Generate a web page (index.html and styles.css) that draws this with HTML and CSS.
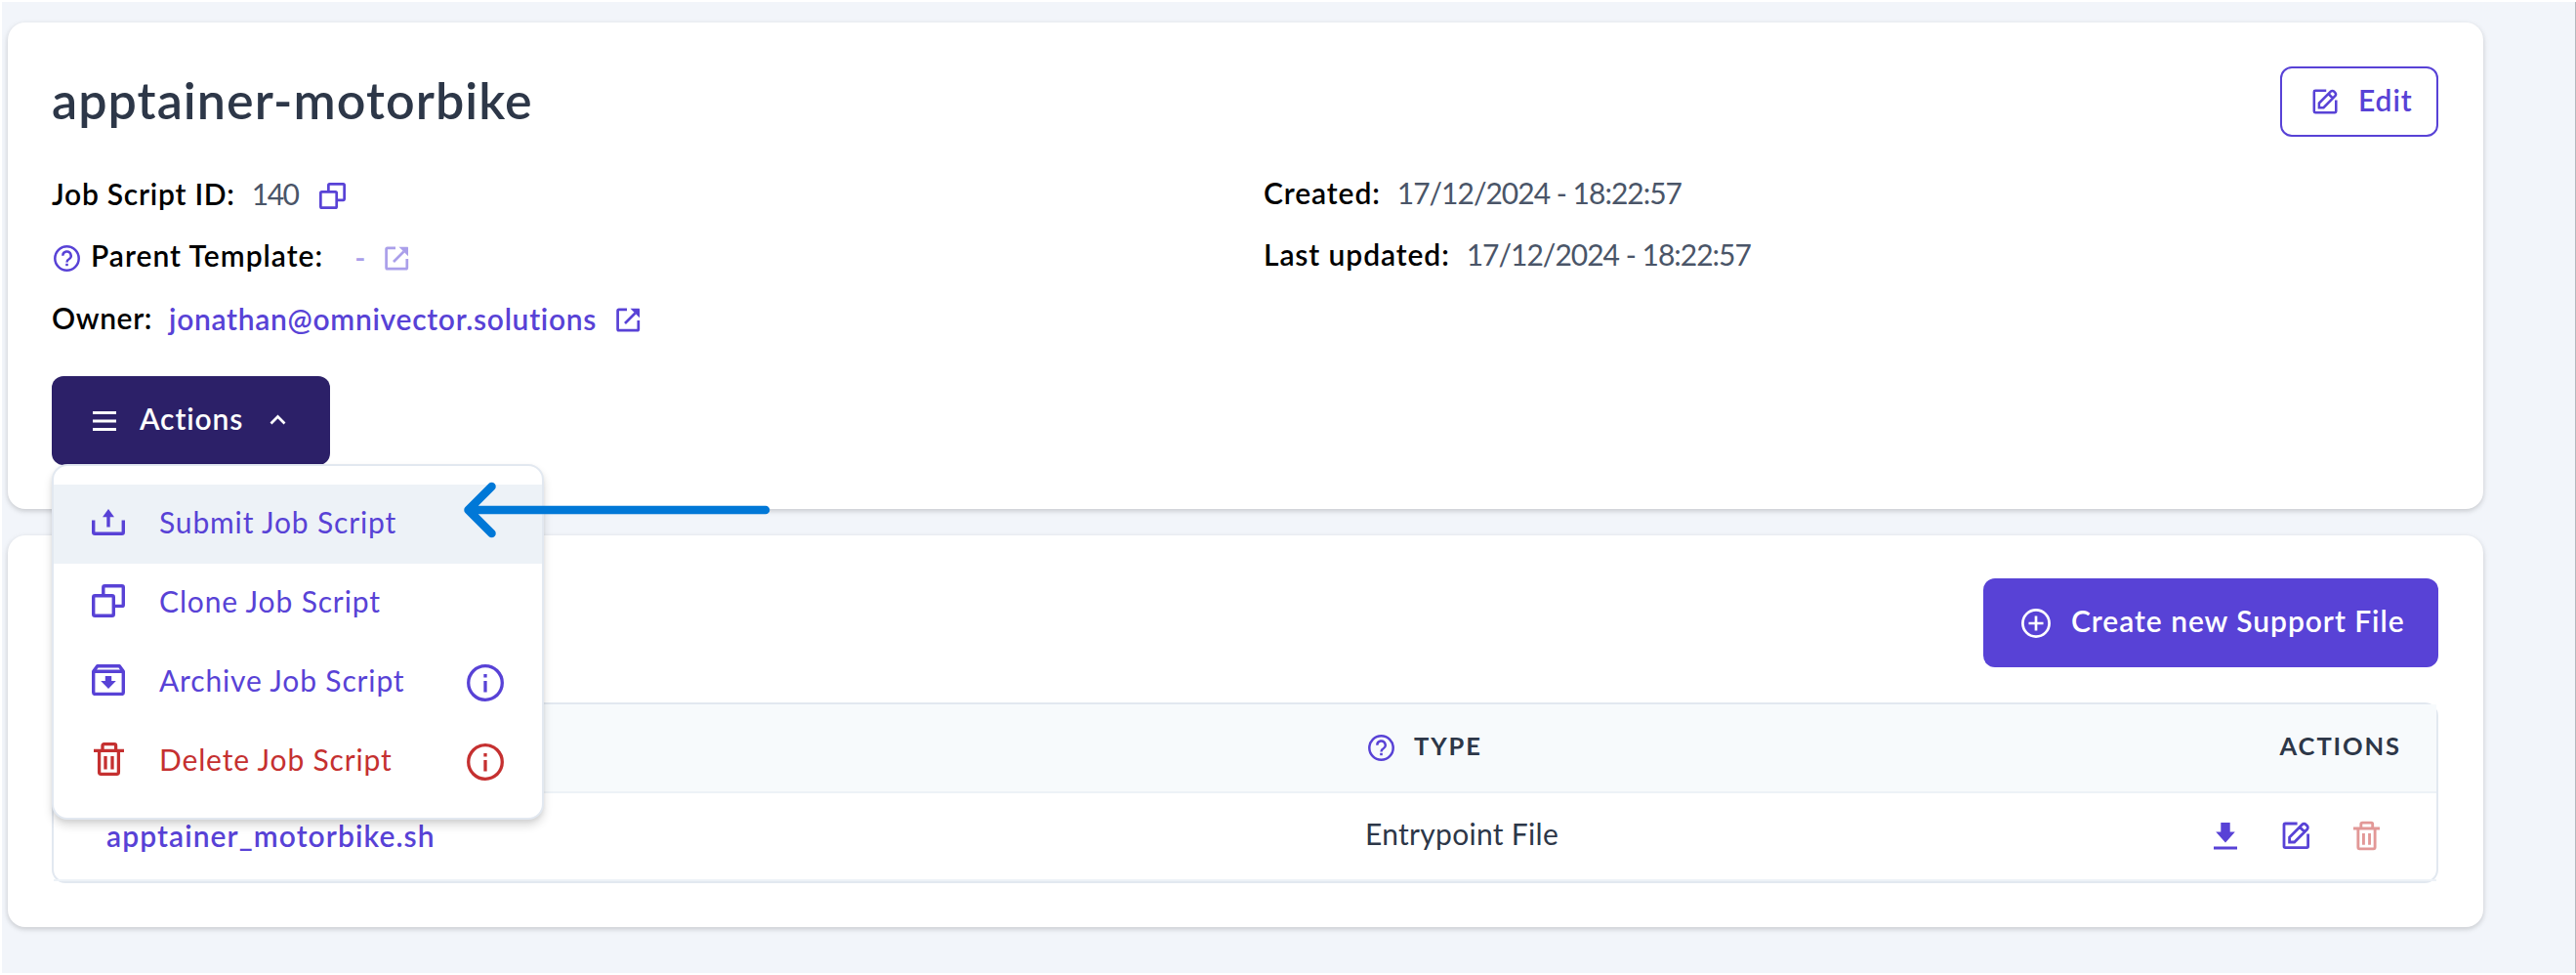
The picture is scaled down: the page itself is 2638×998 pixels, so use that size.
FILE: index.html
```
<!DOCTYPE html>
<html lang="en">
<head>
<meta charset="utf-8">
<title>apptainer-motorbike</title>
<link rel="stylesheet" href="styles.css">
</head>
<body>
<svg class="defs" width="0" height="0" aria-hidden="true">
  <symbol id="copy" viewBox="0 0 34 34"><g fill="none" stroke="currentColor" stroke-width="3.4"><rect x="1.7" y="11.7" width="20.6" height="20.6" rx="1.5"/><path d="M11.8 11.5V3.2q0-1.5 1.5-1.5h17.5q1.5 0 1.5 1.5v17.7q0 1.5-1.5 1.5h-8"/></g></symbol>
  <symbol id="external" viewBox="0 0 25 25"><path d="M11 1.8H2.8q-1.2 0-1.2 1.2v19q0 1.2 1.2 1.2h18.8q1.2 0 1.2-1.2V13M9 16l10.500-10.500" fill="none" stroke="currentColor" stroke-width="2.700"/><path d="M14.500.7h9q.5 0 .5.500v9z" fill="currentColor"/></symbol>
  <symbol id="edit" viewBox="0 0 28.500 28.500"><path d="M15.600 2H3.300Q2 2 2 3.300v22q0 1.300 1.300 1.300h22q1.300 0 1.300-1.300V12.500M7.600 21v-5L20.600 2.900a2.600 2.600 0 0 1 3.700 0l1.300 1.300a2.600 2.600 0 0 1 0 3.700L12.600 21zM18 5.500l5 5" fill="none" stroke="currentColor" stroke-width="2.800"/></symbol>
  <symbol id="trash" viewBox="0 0 31 34"><path d="M0 8.400h31M9 8V3.200q0-1.500 1.500-1.500h10.600q1.500 0 1.500 1.500V8M5.600 8.500v22q0 1.800 1.800 1.800h16.200q1.800 0 1.800-1.800v-22M12 14v13.500M19 14v13.500" fill="none" stroke="currentColor" stroke-width="3.300"/></symbol>
  <symbol id="archive" viewBox="0 0 34 32"><path d="M1.700 7.200v21.600q0 1.600 1.600 1.600h27.400q1.600 0 1.600-1.600V7.200l-4-5.500H5.700zM2 7.200h30" fill="none" stroke="currentColor" stroke-width="3.400" stroke-linejoin="round"/><path d="M13.800 12h6.400v5h4.600L17 25l-7.800-8h4.600z" fill="currentColor"/></symbol>
  <symbol id="submit" viewBox="0 0 34 27"><path d="M1.700 11.500v12.300q0 1.500 1.500 1.500h27.600q1.500 0 1.500-1.500V11.500M17 18.500V6" fill="none" stroke="currentColor" stroke-width="3.400"/><path d="M17 0l6 8.200H11z" fill="currentColor"/></symbol>
  <symbol id="help" viewBox="0 0 27 27"><circle cx="13.500" cy="13.500" r="12.200" fill="none" stroke="currentColor" stroke-width="2.500"/><path d="M9.300 10.700a4.200 4.200 0 1 1 6.300 3.600q-2.100 1.100-2.100 3.200" fill="none" stroke="currentColor" stroke-width="2.400"/><path d="M12.200 18.800h2.600v2.400h-2.600z" fill="currentColor"/></symbol>
  <symbol id="info" viewBox="0 0 38 38"><circle cx="19" cy="19" r="17.300" fill="none" stroke="currentColor" stroke-width="3.300"/><path d="M19 17v11.500M19 10v3.500" stroke="currentColor" stroke-width="3.300"/></symbol>
</svg>
<main class="page">
  <section class="card summary">
    <header class="summary-head">
      <h1 class="title">apptainer-motorbike</h1>
      <button class="btn-outline"><svg class="i-edit-sm"><use href="#edit"/></svg><span>Edit</span></button>
    </header>
    <div class="meta">
      <div class="meta-left">
        <div class="field"><span class="label id">Job Script ID:</span><span class="value">140</span><svg class="i-copy"><use href="#copy"/></svg></div>
        <div class="field"><svg class="i-help"><use href="#help"/></svg><span class="label parent">Parent Template:</span><span class="link faded dash">-</span><svg class="i-ext faded"><use href="#external"/></svg></div>
        <div class="field"><span class="label owner">Owner:</span><span class="link email">jonathan@omnivector.solutions</span><svg class="i-ext"><use href="#external"/></svg></div>
      </div>
      <div class="meta-right">
        <div class="field"><span class="label">Created:</span><span class="value date">17/12/2024 - 18:22:57</span></div>
        <div class="field"><span class="label">Last updated:</span><span class="value date">17/12/2024 - 18:22:57</span></div>
      </div>
    </div>
    <div class="dropdown">
      <button class="btn-dark">
        <svg class="i-bars" viewBox="0 0 24 20"><path d="M0 1.500h24M0 10h24M0 18.500h24" stroke="currentColor" stroke-width="2.800"/></svg>
        <span>Actions</span>
        <svg class="i-chevron" viewBox="0 0 17 11"><path d="M1.500 9.500l7-7 7 7" fill="none" stroke="currentColor" stroke-width="2.700"/></svg>
      </button>
      <div class="menu">
        <div class="item active"><span class="slot"><svg width="34" height="27"><use href="#submit"/></svg></span><span>Submit Job Script</span></div>
        <div class="item"><span class="slot"><svg width="34" height="34"><use href="#copy"/></svg></span><span>Clone Job Script</span></div>
        <div class="item"><span class="slot"><svg width="34" height="32"><use href="#archive"/></svg></span><span>Archive Job Script</span><svg class="i-info"><use href="#info"/></svg></div>
        <div class="item danger"><span class="slot"><svg width="31" height="34"><use href="#trash"/></svg></span><span>Delete Job Script</span><svg class="i-info"><use href="#info"/></svg></div>
      </div>
      <svg class="arrow" viewBox="0 0 316 58"><path d="M310 29H6M29.500 5L5.500 29l24 24" fill="none" stroke="#0078d7" stroke-width="8.500" stroke-linecap="round" stroke-linejoin="round"/></svg>
    </div>
  </section>
  <section class="card files">
    <div class="toolbar">
      <button class="btn-primary">
        <svg class="i-plus" viewBox="0 0 30 30"><circle cx="15" cy="15" r="13.600" fill="none" stroke="currentColor" stroke-width="2.700"/><path d="M7.500 15h15M15 7.500v15" stroke="currentColor" stroke-width="2.700"/></svg>
        <span>Create new Support File</span>
      </button>
    </div>
    <div class="table">
      <div class="row head"><span></span><span class="th"><svg class="i-help"><use href="#help"/></svg>TYPE</span><span class="th end">ACTIONS</span></div>
      <div class="row"><span class="link file">apptainer_motorbike.sh</span><span class="type">Entrypoint File</span>
        <span class="tools">
          <svg class="i-down" viewBox="0 0 24 28"><path d="M7.300 0h9.400v9.500h5.100L12 20.500 2.200 9.500h5.100zM0 24.500h24v3H0z" fill="currentColor"/></svg>
          <svg class="i-edit"><use href="#edit"/></svg>
          <svg class="i-trash"><use href="#trash"/></svg>
        </span>
      </div>
    </div>
  </section>
</main>
</body>
</html>
```
FILE: styles.css
```
* { box-sizing: border-box; }
body { margin: 0; padding: 2px 0 2px 2px; background: #fff; font: 400 30px/40px Lato, "Open Sans", sans-serif; color: #2d3748; }
svg { display: block; flex: none; }
button { font: inherit; border: 0; margin: 0; padding: 0; display: flex; align-items: center; }
.defs { position: absolute; }
.page { height: 994px; background: #f2f5fa; border-right: 1px solid #b4b8bd; padding: 21px 94px 0 6px; }
.card { background: #fff; border-radius: 18px; box-shadow: 0 2px 6px rgba(0, 0, 0, .12), 0 2px 4px rgba(0, 0, 0, .07); }
.summary { height: 498px; padding: 45px 46px 0 45px; }
.summary-head { display: flex; justify-content: space-between; height: 72px; }
.title { margin: 0; font-size: 52px; line-height: 68px; font-weight: 600; letter-spacing: 1.050px; }
.btn-outline { width: 162px; height: 72px; border: 2px solid #5842d6; border-radius: 12px; background: #fff; color: #5842d6; padding: 0 0 4px 31px; gap: 21px; font-weight: 600; letter-spacing: .9px; }
.i-edit-sm { width: 26px; height: 26px; margin-top: 3px; }

.meta { display: grid; grid-template-columns: 1241px 1fr; margin-top: 26px; }
.meta-right { margin-top: -1px; }
.field { display: flex; align-items: center; height: 63.500px; }
.label { color: #000; font-weight: 600; letter-spacing: .9px; }
.id { letter-spacing: .75px; }
.owner { letter-spacing: .6px; }
.value { color: #4a5568; margin-left: 17px; letter-spacing: -1.500px; }
.date { margin-left: 17px; letter-spacing: -1px; }
.link { color: #5842d6; font-weight: 600; }
.email { margin-left: 17px; letter-spacing: .7px; padding-top: 2px; }
.faded { opacity: .5; }
.i-copy { width: 27px; height: 27px; margin: 6px 0 0 22px; color: #5842d6; }
.i-help { width: 27px; height: 27px; color: #5842d6; margin: 3px 12px 0 2px; }
.field .i-help { margin-top: 6px; margin-right: 11px; }
.parent { letter-spacing: 1px; }
.dash { margin-left: 32px; padding-top: 3px; }
.i-ext { width: 25px; height: 25px; color: #5842d6; margin: 6px 0 0 20px; }

.dropdown { position: relative; margin-top: 28px; }
.btn-dark { width: 285px; height: 91px; border-radius: 12px; background: #2c2068; color: #fff; padding: 0 0 5px 42px; font-weight: 600; letter-spacing: .9px; }
.i-bars { width: 24px; height: 20px; margin: 6px 24px 0 0; }
.i-chevron { width: 17px; height: 11px; margin: 3px 0 0 27px; }
.menu { position: absolute; left: 0; top: 90.500px; width: 504px; border: 2px solid #e2e8f0; border-radius: 16px; background: #fff; padding: 19px 0 17px; box-shadow: 0 6px 10px rgba(0, 0, 0, .14), 0 2px 4px rgba(0, 0, 0, .06); z-index: 2; }
.item { display: flex; align-items: center; height: 81px; padding: 0 39px 5px; color: #5842d6; letter-spacing: .85px; }
.active { background: #edf2f7; }
.danger { color: #c53030; }
.slot { width: 34px; margin-right: 35px; display: flex; justify-content: center; }
.i-info { width: 38px; height: 38px; margin: 5px 0 0 auto; }
.arrow { position: absolute; left: 421px; top: 108.500px; width: 316px; height: 58px; z-index: 3; }

.files { height: 401px; margin-top: 26.500px; padding: 44.500px 46px 0 45px; }
.toolbar { display: flex; justify-content: flex-end; }
.btn-primary { width: 466px; height: 91px; border-radius: 12px; background: #5842d6; color: #fff; padding: 0 0 5px 39px; gap: 21px; font-weight: 600; letter-spacing: .95px; }
.i-plus { width: 30px; height: 30px; margin-top: 5px; }
.table { margin-top: 36px; border: 2px solid #e2e8f0; border-radius: 14px; }
.row { display: grid; grid-template-columns: 1289px 1fr 300px; align-items: center; height: 90px; padding: 0 36px 6px 54px; border-bottom: 2px solid #edf2f7; }
.head { height: 91px; background: #f7fafc; }
.th { display: flex; align-items: center; font-size: 25.500px; font-weight: 700; letter-spacing: 1.900px; }
.th .i-help { margin: 5px 20px 0 3px; }
.end { justify-content: flex-end; }
.file { letter-spacing: 1.080px; padding-top: 4px; }
.type { letter-spacing: .3px; }
.tools { display: flex; align-items: center; justify-content: flex-end; color: #5842d6; padding: 5px 22px 0 0; }
.i-down { width: 24px; height: 28px; }
.i-edit { width: 28.500px; height: 28.500px; margin: 0 45px 0 46px; }
.i-trash { width: 27px; height: 31px; color: #e29897; }
```
